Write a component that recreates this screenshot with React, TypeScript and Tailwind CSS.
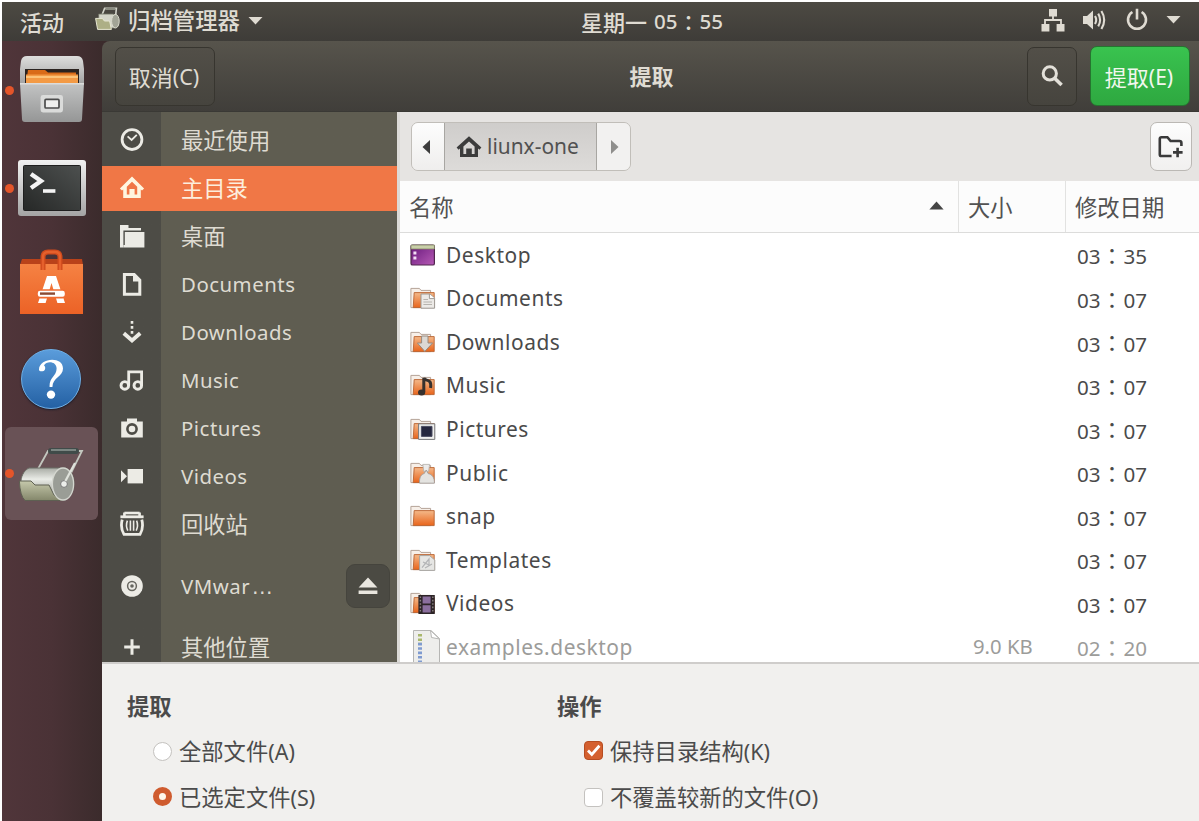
import React from "react";

const INK = "#ecebe5";

function SideIcon({ kind }: { kind: string }) {
  return (
    <svg width="26" height="26" viewBox="0 0 26 26" fill="none" stroke={INK} strokeWidth="2.6" className="shrink-0">
      {kind === "recent" && (
        <>
          <circle cx="13" cy="12.6" r="9.9" strokeWidth="2.8" />
          <path d="M8.6 9.4 L12.6 13 L17.8 7.8" strokeWidth="1.8" />
        </>
      )}
      {kind === "home" && (
        <>
          <path d="M0.9 13.4 L13 1.6 L25.1 13.4 L23 15.4 L21.8 14.6 V23 H4.2 V14.6 L3 15.4 Z" fill="#fff6df" stroke="none" />
          <path d="M7.8 19.6 V11.8 L13 6.8 L18.2 11.8 V19.6 H15.6 V14 H10.4 V19.6 Z" fill="#f07746" stroke="none" />
        </>
      )}
      {kind === "desktop" && (
        <g fill={INK} stroke="none">
          <path d="M1 2 H9.5 V5 H22 V7.4 H4.4 V24.6 H1 Z" />
          <path d="M5.8 9 H25.4 V24.6 H4.4 V22 H5.8 Z" />
        </g>
      )}
      {kind === "docs" && (
        <>
          <path d="M5.4 3.6 H15.2 L20.8 9.2 V23.2 H5.4 Z" strokeWidth="3" />
          <path d="M14 3 V10.4 H21.4 Z" fill={INK} stroke="none" />
        </>
      )}
      {kind === "down" && (
        <>
          <path d="M13 2 V16" strokeWidth="2.6" strokeDasharray="2.8 2.2" />
          <path d="M4.8 14.2 L13 21.4 L21.2 14.2" strokeWidth="3.8" />
        </>
      )}
      {kind === "music" && (
        <>
          <circle cx="5.8" cy="18.4" r="3.8" strokeWidth="2.9" />
          <circle cx="18.8" cy="18.4" r="3.8" strokeWidth="2.9" />
          <path d="M9.7 18.4 V4.8 H22.6 V18.4" strokeWidth="2.8" />
        </>
      )}
      {kind === "pics" && (
        <>
          <path d="M2.2 6.6 H8 V3.4 H18 V6.6 H23.8 V22.4 H2.2 Z" fill={INK} stroke="none" />
          <circle cx="13" cy="14" r="4.6" stroke="#4d4c46" strokeWidth="2.6" />
        </>
      )}
      {kind === "videos" && (
        <g fill={INK} stroke="none">
          <path d="M8.6 6 H24 V20.4 H8.6 Z" />
          <path d="M2 7.2 L8 13.2 L2 19.2 Z" />
        </g>
      )}
      {kind === "trash" && (
        <>
          <path d="M5.4 2 H20.6" />
          <path d="M1.4 5.8 H24.6" strokeWidth="2.8" />
          <path d="M5.4 1.4 V5 M20.6 1.4 V5" />
          <path d="M3.2 8.6 C1.8 14 2.4 19 5 23.4 H21 C23.6 19 24.2 14 22.8 8.6" strokeWidth="2.8" />
          <path d="M8.4 9.6 Q6.4 14.6 8.8 19.6 M11.4 9.6 V19.8 M14.6 9.6 V19.8 M17.6 9.6 Q19.6 14.6 17.2 19.6" strokeWidth="1.6" />
        </>
      )}
      {kind === "disc" && (
        <>
          <circle cx="13" cy="13" r="10.8" fill={INK} stroke="none" />
          <circle cx="13" cy="13" r="4.4" stroke="#67665f" strokeWidth="1.5" />
          <circle cx="13" cy="13" r="1.8" fill="#67665f" stroke="none" />
        </>
      )}
      {kind === "plus" && <path d="M13 5.2 V20.8 M5.2 13 H20.8" strokeWidth="3" />}
    </svg>
  );
}

const places = [
  { k: "recent", t: "最近使用", cjk: true },
  { k: "home", t: "主目录", cjk: true },
  { k: "desktop", t: "桌面", cjk: true },
  { k: "docs", t: "Documents" },
  { k: "down", t: "Downloads" },
  { k: "music", t: "Music" },
  { k: "pics", t: "Pictures" },
  { k: "videos", t: "Videos" },
  { k: "trash", t: "回收站", cjk: true },
  { k: "disc", t: "VMwar" },
  { k: "plus", t: "其他位置", cjk: true },
];

function FileIcon({ kind }: { kind: string }) {
  if (kind === "file")
    return (
      <svg width="36" height="36" viewBox="0 0 36 36" className="shrink-0">
        <path d="M3.5 1.5 H21 L29.5 9.5 V34 H3.5 Z" fill="#eeeeec" stroke="#b6b6b4" />
        <path d="M20.5 1.5 L21.5 8.5 L29.5 10 Z" fill="#fff" stroke="#b6b6b4" />
        <path d="M10 5 V14" stroke="#a9b86c" strokeWidth="4" strokeDasharray="2.6 1.8" />
        <path d="M10 13.8 V34" stroke="#7f9bd0" strokeWidth="4" strokeDasharray="2.6 1.8" />
      </svg>
    );
  if (kind === "desk")
    return (
      <svg width="26" height="24" viewBox="0 0 26 24" className="shrink-0">
        <rect x="1" y="2" width="23.4" height="20" rx="1.6" fill="url(#purple)" stroke="#52264f" strokeWidth="1.2" />
        <path d="M1 2 H24.4 V6 H1 Z" fill="#c9cfa9" stroke="#848664" strokeWidth="0.8" />
        <path d="M3.4 8.4 H6.4 V11.6 H3.4 Z M3.4 13.4 H6.4 V16.6 H3.4 Z" fill="#f3def5" />
      </svg>
    );
  return (
    <svg width="26" height="24" viewBox="0 0 26 24" className="shrink-0">
      <path d="M0.9 21.6 V2.4 H9.4 L11 4.4 H20.6 V21.6 Z" fill="#f7efe8" stroke="#b5a398" strokeWidth="1" />
      <path d="M3.2 21.6 L4.2 6.6 H24.2 V21.6 Z" fill="url(#folder)" stroke="#b9622f" strokeWidth="0.9" />
      {kind === "docs" && (
        <>
          <path d="M11 8 H20 L24.6 12 V22.2 H11 Z" fill="#eceae7" stroke="#9d9a95" />
          <path d="M19.4 8 V12.6 H24.6" fill="#fff" stroke="#9d9a95" />
          <path d="M13.4 13.5 H18 M13.4 16 H22 M13.4 18.5 H22" stroke="#b6b3ae" />
        </>
      )}
      {kind === "down" && <path d="M11.6 6 H18 V13 H22.6 L14.8 21.4 L7.4 13 H11.6 Z" fill="#dcd9d4" stroke="#968a80" />}
      {kind === "music" && (
        <>
          <path d="M13.8 19 V5 C15 9 22 4.4 20.6 15" fill="none" stroke="#37312e" strokeWidth="3" />
          <ellipse cx="11.6" cy="19.6" rx="3.6" ry="3" fill="#37312e" />
        </>
      )}
      {kind === "pics" && (
        <>
          <path d="M8.6 6.8 H24.8 V22.4 H8.6 Z" fill="#f0f0ee" stroke="#77797c" />
          <path d="M11.4 9.4 H22 V19.4 H11.4 Z" fill="#26283f" stroke="#4b4d62" />
        </>
      )}
      {kind === "public" && (
        <>
          <path d="M12.8 3.4 H19.6 L18.6 10.4 H13.8 Z" fill="#ecebea" stroke="#b3aeaa" strokeWidth="0.8" />
          <path d="M9.6 22.2 C9 16.4 11.4 13.2 14.2 12.6 L16.2 9 L18.2 12.6 C22 13.4 24.6 16.4 24.4 22.2 Z" fill="#e4e3e0" stroke="#a19c98" strokeWidth="0.9" />
        </>
      )}
      {kind === "tpl" && (
        <>
          <path d="M9.6 7.6 H19.6 L24.8 12 V22.4 H9.6 Z" fill="#e6e6e4" stroke="#a7a5a1" />
          <path d="M12 19.6 L19 11 L19 17 L13 14 M15 20 L22 16" fill="none" stroke="#b3b4b6" strokeWidth="1.2" />
        </>
      )}
      {kind === "videos" && (
        <>
          <path d="M8.4 4 H24.8 V23 H8.4 Z" fill="#2c2427" />
          <path d="M12.6 5.6 H20.6 V12.6 H12.6 Z M12.6 14.2 H20.6 V21.6 H12.6 Z" fill="#8b6f9e" />
          <path d="M10.4 5.4 V22.6 M22.8 5.4 V22.6" stroke="#89807f" strokeWidth="1.4" strokeDasharray="1.6 1.8" />
        </>
      )}
    </svg>
  );
}

const files = [
  { k: "desk", n: "Desktop", t: ["03", "35"] },
  { k: "docs", n: "Documents", t: ["03", "07"] },
  { k: "down", n: "Downloads", t: ["03", "07"] },
  { k: "music", n: "Music", t: ["03", "07"] },
  { k: "pics", n: "Pictures", t: ["03", "07"] },
  { k: "public", n: "Public", t: ["03", "07"] },
  { k: "snap", n: "snap", t: ["03", "07"] },
  { k: "tpl", n: "Templates", t: ["03", "07"] },
  { k: "videos", n: "Videos", t: ["03", "07"] },
  { k: "file", n: "examples.desktop", s: "9.0 KB", t: ["02", "20"] },
];

function ArchiverMini() {
  return (
    <svg width="26" height="24" viewBox="0 0 26 24">
      <path d="M7 8 L9.6 1.4 H21.4 L20.6 9" fill="none" stroke="#d3d4ca" strokeWidth="1.6" />
      <path d="M10.4 1.8 H20.4" stroke="#8b8d82" strokeWidth="2.4" />
      <path d="M3.6 7 H18 C24 8 24.4 19 19.4 21 H4 Z" fill="#d3d4c8" stroke="#6d6e5f" strokeWidth="0.8" />
      <path d="M0.6 11.4 H7.4 L9.4 14 H14.6 L16.4 22.4 H2.6 Z" fill="#adaf86" stroke="#e6e6d2" strokeWidth="1" />
      <ellipse cx="20.4" cy="14.2" rx="3.8" ry="6.8" fill="#a2a496" stroke="#dadacc" />
    </svg>
  );
}

function Dock() {
  return (
    <aside className="flex w-[100px] shrink-0 flex-col bg-linear-to-r from-[#50353a] via-[#4a3236] to-[#3b2b2c]">
      <div className="flex h-[98px] items-center">
        <i className="ml-[3px] size-[9px] rounded-full bg-[#e4552a]" />
        <svg width="70" height="70" viewBox="0 0 70 70" className="ml-[3px]">
          <path d="M4 6 Q5 1 10 1 H60 Q65 1 66 6 L67 14 V30 H3 V14 Z" fill="url(#metalTop)" />
          <path d="M8 14 H62 V30 H8 Z" fill="#2b2320" />
          <path d="M11 15 H28 L31 17.5 H59 V28 H9 Z" fill="#d96b18" />
          <path d="M9 19.6 H61 V29 H9 Z" fill="#f39a45" />
          <path d="M9 22 H61" stroke="#ffd08a" strokeWidth="1.6" />
          <path d="M3 28 H67 L65 64 Q65 67 62 67 H8 Q5 67 5 64 Z" fill="url(#metal)" />
          <path d="M3 28.8 H67" stroke="#dcdcdb" strokeWidth="1.4" />
          <rect x="23.6" y="40" width="22.4" height="17.4" rx="2.4" fill="#dadbda" />
          <rect x="28" y="44.4" width="14" height="8.6" rx="1" fill="#efefee" stroke="#4c4c4c" strokeWidth="1.7" />
        </svg>
      </div>
      <div className="flex h-[98px] items-center">
        <i className="ml-[3px] size-[9px] rounded-full bg-[#e4552a]" />
        <svg width="70" height="60" viewBox="0 0 70 60" className="ml-[3px]">
          <rect x="1" y="2" width="68" height="56" rx="3" fill="url(#frame)" />
          <rect x="6.5" y="7.5" width="57" height="45" rx="1" fill="url(#term)" stroke="#1f1f1f" />
          <path d="M14 16 L24 23 L14 30" fill="none" stroke="#f4f4f4" strokeWidth="4.4" />
          <path d="M26 33 H38.4" stroke="#f4f4f4" strokeWidth="3.6" />
        </svg>
      </div>
      <div className="flex h-[94px] items-center pb-[4px] pl-[17px]">
        <svg width="66" height="68" viewBox="0 0 66 68">
          <path d="M1 17 L3 11 H63 L64 17 Z" fill="#b9421a" />
          <path d="M1 16 H64 V66 H1 Z" fill="url(#bag)" />
          <path d="M24 22 V9 Q24 4 29 4 H36 Q41 4 41 9 V22" fill="none" stroke="#cf4a1c" strokeWidth="5" />
          <path d="M24 22 V9 Q24 4 29 4 H36 Q41 4 41 9 V22" fill="none" stroke="#e5602c" strokeWidth="2.4" />
          <path d="M28 28 H37 L46 55 H38.4 L32.5 35 L26.6 55 H19 Z" fill="#fff" />
          <rect x="18" y="42" width="28.6" height="7.6" rx="3" fill="#fff" stroke="#ef6d33" strokeWidth="1.6" />
          <path d="M21 45.6 H36" stroke="#8b4a33" strokeWidth="2.4" />
        </svg>
      </div>
      <div className="flex h-[96px] items-center pl-[19px]">
        <div className="flex size-[60px] items-center justify-center rounded-full border border-[#6db0e8] bg-linear-to-b from-[#5a9cdb] to-[#2461a4] shadow-[0_1px_2px_#1d1d2b]">
          <svg width="36" height="46" viewBox="0 0 36 46">
            <path d="M6 14 C5.4 2 30 -0.6 30 12.6 C30 21 19.6 21.4 19.4 31 H16.6 C16 21 23.6 20.4 23.6 12.4 C23.6 5 13.4 4.4 11 9.4 C13 10.6 12.6 15 9.4 15.2 C7.6 15.4 6.2 15 6 14 Z" fill="#fff" />
            <circle cx="18" cy="38.6" r="4.2" fill="#fff" />
          </svg>
        </div>
      </div>
      <div className="ml-[3px] flex h-[93px] w-[93px] items-center rounded-[6px] bg-[#695256]">
        <i className="size-[9px] rounded-full bg-[#e4552a]" />
        <svg width="68" height="62" viewBox="0 0 68 62" className="ml-[3px]">
          <path d="M21 26 L31 8 H65 L50 38" fill="none" stroke="#c3c7bf" strokeWidth="1.8" />
          <path d="M34 8 H59" stroke="#404b49" strokeWidth="6" strokeLinecap="round" />
          <path d="M34 7 H59" stroke="#8a9591" strokeWidth="1.6" />
          <path d="M12 25 H48 C60 28 60 52 48 57 H12 C1 51 1 30 12 25 Z" fill="url(#drum)" stroke="#6b6f66" />
          <path d="M2.4 38 H14 L18 42 H32 L37 52 L46 57.5 H8 Q3 53 2.4 38 Z" fill="url(#olive)" stroke="#5e6052" />
          <ellipse cx="46" cy="41" rx="10.6" ry="16" fill="#9a9d96" stroke="#d4d6cf" strokeWidth="1.3" />
          <circle cx="47" cy="41" r="3.4" fill="#eceeea" stroke="#777" />
          <path d="M48.4 38 L58 20" stroke="#e0e3dc" strokeWidth="2.2" />
        </svg>
      </div>
    </aside>
  );
}

export default function App() {
  return (
    <div className="h-[821px] w-[1199px] overflow-hidden bg-white pt-[2px] pl-[2px] font-['Noto_Sans','Noto_Sans_CJK_SC',sans-serif] text-[20px] text-[#4a4a4a]">
      <svg className="absolute size-0">
        <defs>
          <linearGradient id="folder" x1="0" y1="0" x2="0" y2="1"><stop offset="0" stopColor="#f4b98a" /><stop offset="1" stopColor="#e8641b" /></linearGradient>
          <linearGradient id="purple" x1="0" y1="0" x2="1" y2="1"><stop offset="0" stopColor="#66177a" /><stop offset="1" stopColor="#b75bb6" /></linearGradient>
          <linearGradient id="metal" x1="0" y1="0" x2="0" y2="1"><stop offset="0" stopColor="#c3c4c4" /><stop offset="1" stopColor="#959696" /></linearGradient>
          <linearGradient id="metalTop" x1="0" y1="0" x2="0" y2="1"><stop offset="0" stopColor="#dededd" /><stop offset="1" stopColor="#a0a0a0" /></linearGradient>
          <linearGradient id="frame" x1="0" y1="0" x2="0" y2="1"><stop offset="0" stopColor="#f1f1f1" /><stop offset="1" stopColor="#a4a4a4" /></linearGradient>
          <linearGradient id="term" x1="1" y1="0" x2="0" y2="1"><stop offset="0" stopColor="#4d504f" /><stop offset="1" stopColor="#262827" /></linearGradient>
          <linearGradient id="bag" x1="0" y1="0" x2="0" y2="1"><stop offset="0" stopColor="#f58243" /><stop offset="1" stopColor="#ec6226" /></linearGradient>
          <linearGradient id="drum" x1="0" y1="0" x2="0" y2="1"><stop offset="0" stopColor="#a9aca5" /><stop offset="0.35" stopColor="#e9ebe6" /><stop offset="1" stopColor="#85887f" /></linearGradient>
          <linearGradient id="olive" x1="0" y1="0" x2="0" y2="1"><stop offset="0" stopColor="#c5c8ab" /><stop offset="1" stopColor="#84876b" /></linearGradient>
        </defs>
      </svg>

      <header className="flex h-[39px] items-center bg-linear-to-b from-[#4d4a43] to-[#3e3c38] text-[22px] font-medium text-[#dfdbd2]">
        <span className="w-[93px] pl-[18px] leading-none">活动</span>
        <div className="mb-[5px]"><ArchiverMini /></div>
        <span className="ml-[7px] text-[22.4px] leading-none">归档管理器</span>
        <svg width="16" height="10" viewBox="0 0 16 10" className="mb-[2px] ml-[8px]"><path d="M0.5 1 H14.5 L7.5 8.6 Z" fill="#dfdbd2" /></svg>
        <span className="ml-[317px] flex w-[300px] items-center leading-none whitespace-nowrap">
          星期一<span className="ml-[7px] text-[20.5px]">05</span><span className="text-[22px]">∶</span><span className="text-[20.5px]">55</span>
        </span>
        <div className="ml-auto flex items-center pr-[17px] pb-[3px]">
          <svg width="24" height="24" viewBox="0 0 24 24" fill="#dfdbd2">
            <path d="M8 1 H16 V8.4 H8 Z M0.5 16 H8.4 V23.4 H0.5 Z M15.6 16 H23.5 V23.4 H15.6 Z" />
            <path d="M12 8 V12 M4 16 V12 H20 V16" fill="none" stroke="#dfdbd2" strokeWidth="1.8" />
          </svg>
          <svg width="26" height="24" viewBox="0 0 26 24" className="ml-[17px]">
            <path d="M1 8 H5 L11 2.6 V21.4 L5 16 H1 Z" fill="#dfdbd2" />
            <path d="M13 8 Q15.4 12 13 16 M16.2 5.6 Q20 12 16.2 18.4 M19.4 3 Q25 12 19.4 21" fill="none" stroke="#dfdbd2" strokeWidth="2.1" />
          </svg>
          <svg width="24" height="24" viewBox="0 0 24 24" className="ml-[17px]" fill="none" stroke="#dfdbd2" strokeWidth="2.6">
            <path d="M7.4 4 A9 9 0 1 0 16.6 4 M12 0.8 V11.4" />
          </svg>
          <svg width="16" height="10" viewBox="0 0 16 10" className="ml-[17px]"><path d="M0.5 1 H14.5 L7.5 8.6 Z" fill="#dfdbd2" /></svg>
        </div>
      </header>

      <div className="flex h-[780px]">
        <Dock />
        <main className="flex h-full min-w-0 flex-1 flex-col bg-[#3b2b2c]">
          <div className="flex h-[71px] shrink-0 items-center rounded-tl-[8px] border-b border-[#3a3935] bg-linear-to-b from-[#57544c] to-[#403e3a] pr-[9px] pl-[13px] text-[22px] text-[#dfdbd2]">
            <button className="flex h-[59px] w-[100px] shrink-0 items-center justify-center rounded-[7px] border border-[#37352f] bg-linear-to-b from-[#524f48] to-[#46443e] pt-[3px] pr-[2px]">
              取消<span className="text-[21.5px]">(C)</span>
            </button>
            <span className="flex-1 pl-[61px] text-center font-bold">提取</span>
            <button className="flex h-[59px] w-[50px] shrink-0 items-center justify-center rounded-[7px] border border-[#37352f] bg-linear-to-b from-[#524f48] to-[#46443e]">
              <svg width="24" height="24" viewBox="0 0 24 24" fill="none" stroke="#e3e0d9">
                <circle cx="9.8" cy="9.4" r="6.6" strokeWidth="3" />
                <path d="M14.4 14 L21.6 21" strokeWidth="3.6" />
              </svg>
            </button>
            <button className="ml-[13px] flex h-[60px] w-[100px] shrink-0 items-center justify-center rounded-[7px] border border-[#25752f] bg-linear-to-b from-[#39c34f] to-[#2ea840] pt-[3px] pr-[2px] text-[#f1f7ee]">
              提取<span className="text-[21px]">(E)</span>
            </button>
          </div>

          <div className="flex h-[550px] shrink-0 overflow-hidden">
            <nav className="flex w-[295px] shrink-0 flex-col bg-linear-to-r from-[#4d4c46] from-[59px] to-[#5f5d51] to-[59px] pt-[4px] text-[#dedbd1]">
              {places.map((p) => (
                <div key={p.k} className={p.k === "disc" ? "flex h-[76px] shrink-0 items-center" : p.k === "plus" ? "flex h-[46px] shrink-0 items-center" : "flex h-[48px] shrink-0 items-center"}>
                  <div className={p.k === "home" ? "flex h-[45px] w-full items-center bg-[#f07746] text-[#fdeedd]" : "flex h-[45px] w-full items-center"}>
                    <div className="flex w-[79px] shrink-0 pl-[17px]"><SideIcon kind={p.k} /></div>
                    <span className={p.cjk ? "pt-[2px] text-[22.3px] leading-[28px]" : "text-[20.4px] tracking-[0.5px]"}>
                      {p.t}
                      {p.k === "disc" && <span className="ml-[1px] font-['Liberation_Sans',sans-serif] text-[22px]">…</span>}
                    </span>
                    {p.k === "disc" && (
                      <button className="mr-[7px] ml-auto flex size-[44px] items-center justify-center rounded-[9px] border border-[#45443d] bg-[#4b4a43]">
                        <svg width="20" height="18" viewBox="0 0 20 18" fill="#e9e6df"><path d="M10 0.6 L19.4 10.6 H0.6 Z M0.6 13.6 H19.4 V17 H0.6 Z" /></svg>
                      </button>
                    )}
                  </div>
                </div>
              ))}
            </nav>

            <section className="flex min-w-0 flex-1 flex-col border-l-[3px] border-[#dcdad7] bg-white">
              <div className="flex h-[69px] shrink-0 items-center bg-[#e6e4e2] pr-[7px] pl-[11px]">
                <div className="flex h-[49px] w-[220px] overflow-hidden rounded-[7px] border border-[#c1beb9]">
                  <div className="flex w-[32px] items-center justify-center bg-linear-to-b from-[#fdfdfd] to-[#efeeed] pr-[4px]">
                    <svg width="8" height="14" viewBox="0 0 8 14"><path d="M8 0 V14 L0.5 7 Z" fill="#3c3c3c" /></svg>
                  </div>
                  <div className="flex w-[153px] items-center border-x border-[#a8a6a2] bg-linear-to-b from-[#cfcdcb] to-[#dddbd9] pl-[11px]">
                    <svg width="26" height="22" viewBox="0 0 26 22">
                      <path d="M0.6 11.6 L13 0.2 L25.4 11.6 L23.4 13.8 L22 12.6 V21 H4 V12.6 L2.6 13.8 Z" fill="#3c3c3c" />
                      <path d="M7.4 18 V10.6 L13 5.6 L18.6 10.6 V18 H15.8 V12.6 H10.2 V18 Z" fill="#d8d6d4" />
                    </svg>
                    <span className="ml-[5px] text-[20.9px] text-[#515151]">liunx-one</span>
                  </div>
                  <div className="flex flex-1 items-center justify-center bg-[#f2f1f0] pl-[2px]">
                    <svg width="8" height="14" viewBox="0 0 8 14"><path d="M0 0 V14 L7.5 7 Z" fill="#8f8e8c" /></svg>
                  </div>
                </div>
                <button className="ml-auto flex h-[49px] w-[42px] items-center justify-center rounded-[7px] border border-[#bbb8b4] bg-linear-to-b from-[#fdfdfd] to-[#f1f0ef]">
                  <svg width="26" height="24" viewBox="0 0 26 24" fill="none" stroke="#3a3a3a" strokeWidth="2.6">
                    <path d="M13.6 21 H3.4 Q1.8 21 1.8 19.4 V3.8 Q1.8 2.2 3.4 2.2 H9.4 L12.6 6 H21.4 Q23.4 6 23.4 8 V11" />
                    <path d="M19.6 12.8 V22.2 M15 17.4 H24.6" />
                  </svg>
                </button>
              </div>
              <div className="flex h-[52px] shrink-0 items-center border-b border-[#dcdcdb] bg-[#fcfcfc] text-[22.3px] text-[#525252]">
                <div className="flex h-full w-[559px] items-center border-r border-[#e2e2e1] pr-[14px] pl-[9px]">
                  <span className="pt-[3px]">名称</span>
                  <svg width="15" height="9" viewBox="0 0 15 9" className="mb-[2px] ml-auto"><path d="M7.5 0.5 L14.6 8.4 H0.4 Z" fill="#444" /></svg>
                </div>
                <div className="flex h-full w-[107px] items-center border-r border-[#e2e2e1] pt-[3px] pl-[9px]">大小</div>
                <div className="pt-[3px] pl-[9px]">修改日期</div>
              </div>
              {files.map((f) => (
                <div key={f.n} className={f.k === "file" ? "flex h-[43.55px] shrink-0 items-center text-[#9c9c9a]" : "flex h-[43.55px] shrink-0 items-center text-[#4a4a4a]"}>
                  <div className="flex w-[46px] shrink-0 pl-[10px]"><FileIcon kind={f.k} /></div>
                  <span className="w-[526px] text-[20.9px] leading-[30px] tracking-[0.55px]">{f.n}</span>
                  <span className="w-[105px] pl-px text-[20.3px]">{f.s}</span>
                  <span className="flex items-center pt-[4px] text-[20.6px] leading-none">
                    {f.t[0]}<span className="text-[23px]">∶</span>{f.t[1]}
                  </span>
                </div>
              ))}
            </section>
          </div>

          <footer className="flex min-h-0 flex-1 border-t-2 border-[#cfcdcb] bg-[#f1f0ee] pl-[25px] text-[22.3px] text-[#4b4b4b]">
            <div className="flex w-[430px] flex-col pt-[20px]">
              <div className="flex h-[46px] items-center text-[22.3px] font-bold">提取</div>
              <div className="flex h-[46px] items-center pl-[26px]">
                <i className="mb-[2px] size-[19px] rounded-full border border-[#c4c2bf] bg-white" />
                <span className="ml-[7px]">全部文件<span className="text-[21.5px]">(A)</span></span>
              </div>
              <div className="flex h-[47px] items-center pl-[26px]">
                <i className="mb-[2px] size-[19px] rounded-full border-[6px] border-[#cf5b2e] bg-[#fff6ea]" />
                <span className="ml-[7px]">已选定文件<span className="text-[21.5px]">(S)</span></span>
              </div>
            </div>
            <div className="flex flex-col pt-[20px]">
              <div className="flex h-[46px] items-center text-[22.3px] font-bold">操作</div>
              <div className="flex h-[46px] items-center pl-[27px]">
                <svg width="19" height="19" viewBox="0 0 19 19" className="mb-[2px]"><rect x="0.5" y="0.5" width="18" height="18" rx="3.5" fill="#d4602f" stroke="#b64d22" /><path d="M4 9.6 L7.8 13.4 L15.4 4.8" fill="none" stroke="#fff" strokeWidth="2.8" /></svg>
                <span className="ml-[7px]">保持目录结构<span className="text-[21.5px]">(K)</span></span>
              </div>
              <div className="flex h-[48px] items-center pt-px pl-[27px]">
                <i className="size-[19px] rounded-[4px] border border-[#c4c2bf] bg-white" />
                <span className="ml-[7px]">不覆盖较新的文件<span className="text-[21.5px]">(O)</span></span>
              </div>
            </div>
          </footer>
        </main>
      </div>
    </div>
  );
}
